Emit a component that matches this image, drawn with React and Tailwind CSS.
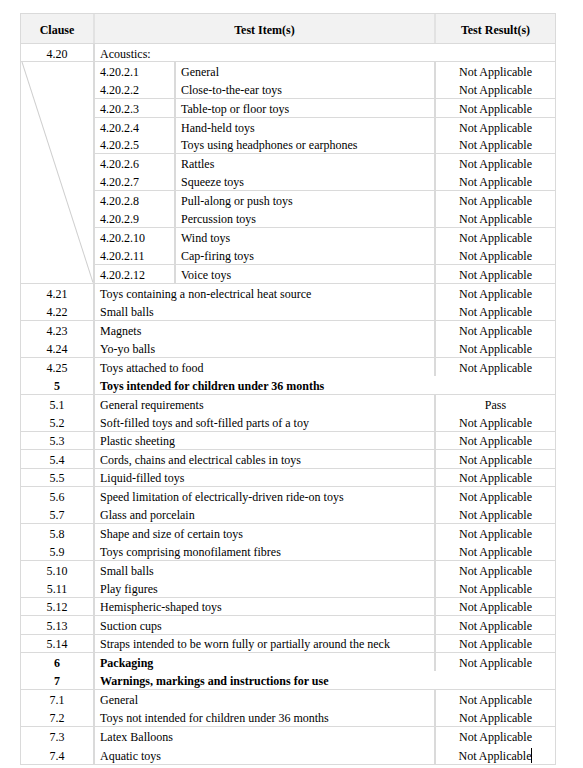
import React from 'react';

const NA = 'Not Applicable';

// top-level blocks, each one a band between two horizontal rules
const blocks = [
    [
        { clause: '4.21', item: 'Toys containing a non-electrical heat source', result: NA },
        { clause: '4.22', item: 'Small balls', result: NA },
    ],
    [
        { clause: '4.23', item: 'Magnets', result: NA },
        { clause: '4.24', item: 'Yo-yo balls', result: NA },
    ],
    [
        { clause: '4.25', item: 'Toys attached to food', result: NA },
        { clause: '5', item: 'Toys intended for children under 36 months', bold: true, span: true },
    ],
    [
        { clause: '5.1', item: 'General requirements', result: 'Pass' },
        { clause: '5.2', item: 'Soft-filled toys and soft-filled parts of a toy', result: NA },
    ],
    [{ clause: '5.3', item: 'Plastic sheeting', result: NA }],
    [{ clause: '5.4', item: 'Cords, chains and electrical cables in toys', result: NA }],
    [{ clause: '5.5', item: 'Liquid-filled toys', result: NA }],
    [
        { clause: '5.6', item: 'Speed limitation of electrically-driven ride-on toys', result: NA },
        { clause: '5.7', item: 'Glass and porcelain', result: NA },
    ],
    [
        { clause: '5.8', item: 'Shape and size of certain toys', result: NA },
        { clause: '5.9', item: 'Toys comprising monofilament fibres', result: NA },
    ],
    [
        { clause: '5.10', item: 'Small balls', result: NA },
        { clause: '5.11', item: 'Play figures', result: NA },
    ],
    [{ clause: '5.12', item: 'Hemispheric-shaped toys', result: NA }],
    [{ clause: '5.13', item: 'Suction cups', result: NA }],
    [{ clause: '5.14', item: 'Straps intended to be worn fully or partially around the neck', result: NA }],
    [
        { clause: '6', item: 'Packaging', result: NA, bold: true },
        { clause: '7', item: 'Warnings, markings and instructions for use', bold: true, span: true },
    ],
    [
        { clause: '7.1', item: 'General', result: NA },
        { clause: '7.2', item: 'Toys not intended for children under 36 months', result: NA },
    ],
    [
        { clause: '7.3', item: 'Latex Balloons', result: NA },
        { clause: '7.4', item: 'Aquatic toys', result: NA, cursor: true },
    ],
];

const acoustics = [
    [['4.20.2.1', 'General'], ['4.20.2.2', 'Close-to-the-ear toys']],
    [['4.20.2.3', 'Table-top or floor toys']],
    [['4.20.2.4', 'Hand-held toys'], ['4.20.2.5', 'Toys using headphones or earphones']],
    [['4.20.2.6', 'Rattles'], ['4.20.2.7', 'Squeeze toys']],
    [['4.20.2.8', 'Pull-along or push toys'], ['4.20.2.9', 'Percussion toys']],
    [['4.20.2.10', 'Wind toys'], ['4.20.2.11', 'Cap-firing toys']],
    [['4.20.2.12', 'Voice toys']],
];

const Row = ({ clause, item, result, bold, span, cursor }) => (
    <div className="flex flex-1">
        <div className={`w-[74px] shrink-0 flex items-center justify-center pt-[2px] border-r-2 border-[#dadada] ${bold ? 'font-bold' : ''}`}>
            {clause}
        </div>
        {span ? (
            <div className={`flex-1 flex items-center pl-[5px] pt-[2px] ${bold ? 'font-bold' : ''}`}>{item}</div>
        ) : (
            <>
                <div className={`w-[341px] shrink-0 flex items-center pl-[5px] pt-[2px] border-r-2 border-[#dadada] ${bold ? 'font-bold' : ''}`}>
                    {item}
                </div>
                <div className="flex-1 flex items-center justify-center pt-[2px]">
                    {result}
                    {cursor && <span className="inline-block w-px h-[15px] bg-black" />}
                </div>
            </>
        )}
    </div>
);

const Block = ({ rows, last }) => (
    <div className={`flex flex-col ${rows.length === 2 ? 'h-[36.92px]' : 'h-[18.46px]'} ${last ? '' : 'border-b border-[#dadada]'}`}>
        {rows.map((r) => (
            <Row key={r.clause} {...r} />
        ))}
    </div>
);

const App = () => {
    return (
        <div className="min-h-[768px] bg-white pt-[13px] font-['Liberation_Serif'] text-[12px] text-black leading-none">
            <div className="ml-[20px] w-[536px] border border-[#dadada]">
                {/* header */}
                <div className="flex h-[30px] bg-[#f2f2f2] font-bold border-b border-[#dadada]">
                    <div className="w-[74px] flex items-center justify-center pt-[2px] border-r-2 border-[#e2e2e2]">Clause</div>
                    <div className="w-[341px] flex items-center justify-center pt-[2px] border-r-2 border-[#e2e2e2]">Test Item(s)</div>
                    <div className="flex-1 flex items-center justify-center pt-[2px]">Test Result(s)</div>
                </div>

                <Block rows={[{ clause: '4.20', item: 'Acoustics:', span: true }]} />

                {/* acoustics sub-clauses with the struck-through clause cell */}
                <div className="flex h-[221.52px] border-b border-[#dadada]">
                    <div className="w-[74px] shrink-0 border-r-2 border-[#dadada]">
                        <svg className="w-full h-full" viewBox="0 0 72 220" preserveAspectRatio="none">
                            <line x1="1" y1="0" x2="72" y2="220" stroke="#cfcfcf" strokeWidth="1" />
                        </svg>
                    </div>
                    <div className="flex-1 flex flex-col">
                        {acoustics.map((grp, gi) => (
                            <div
                                key={gi}
                                className={`flex flex-col ${grp.length === 2 ? 'h-[36.92px]' : 'h-[18.46px]'} ${gi === acoustics.length - 1 ? '' : 'border-b border-[#dadada]'}`}
                            >
                                {grp.map(([num, name]) => (
                                    <div key={num} className="flex flex-1">
                                        <div className="w-[81px] shrink-0 flex items-center pl-[5px] pt-[2px] border-r-2 border-[#dadada]">{num}</div>
                                        <div className="w-[260px] shrink-0 flex items-center pl-[5px] pt-[2px] border-r-2 border-[#dadada]">{name}</div>
                                        <div className="flex-1 flex items-center justify-center pt-[2px]">{NA}</div>
                                    </div>
                                ))}
                            </div>
                        ))}
                    </div>
                </div>

                {blocks.map((rows, i) => (
                    <Block key={i} rows={rows} last={i === blocks.length - 1} />
                ))}
            </div>
        </div>
    );
};

export default App;
